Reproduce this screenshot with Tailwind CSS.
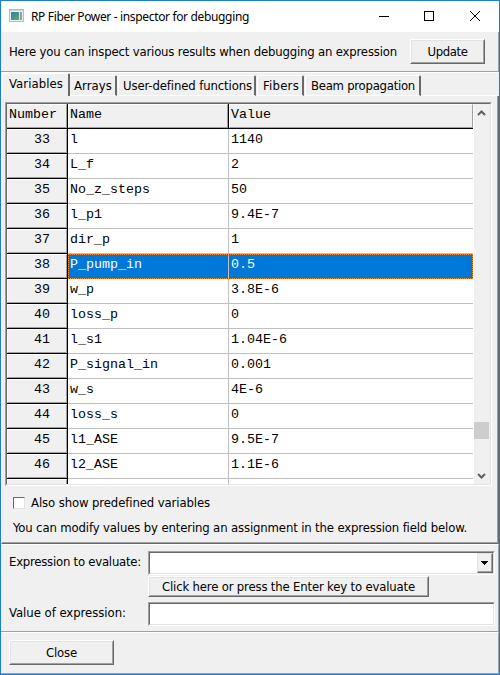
<!DOCTYPE html>
<html lang="en"><head><meta charset="utf-8"><title>RP Fiber Power - inspector for debugging</title>
<script src="https://cdn.jsdelivr.net/npm/@tailwindcss/browser@4"></script></head>
<body class="w-[500px] h-[675px] overflow-hidden">
<main class="w-[500px] h-[675px] flex flex-col border border-[#1a7fd4] bg-[#f0f0f0] text-black text-[13px] leading-[16px] whitespace-nowrap font-['DejaVu_Sans_Condensed','DejaVu_Sans','Noto_Sans',sans-serif] font-stretch-condensed">
  <header class="h-[31px] shrink-0 bg-white flex items-center pl-2 text-[12px] font-['Noto_Sans',sans-serif] font-stretch-normal">
    <svg class="w-4 h-4 shrink-0 -mt-[2px]" viewBox="0 0 16 16" shape-rendering="crispEdges"><defs><linearGradient id="g" x2="1" y2="1"><stop stop-color="#397daf"/><stop offset="1" stop-color="#58a86c"/></linearGradient></defs><path fill="#b5bbc0" d="M0 1h15v13H0z"/><path fill="#eef1f2" d="M1 2h13v11H1z"/><path fill="#cbd0d2" d="M1 2h13v1H1z"/><path fill="url(#g)" d="M2 4h8v8H2z"/><path fill="#dce3e6" d="M10 4h1v8h-1z"/><path fill="#8aa0a7" d="M11 4h2v8h-2z"/></svg>
    <span class="ml-[6px]" data-w="218">RP Fiber Power - inspector for debugging</span>
    <svg class="ml-auto mr-[17px] mt-[-2px] w-[103px] h-3 shrink-0" viewBox="0 0 103 12" fill="none" stroke="#000"><path d="M0 6.5h10M45.500 1.500h9v9h-9z" shape-rendering="crispEdges"/><path d="M91 1l10 10M101 1L91 11"/></svg>
  </header>
  <section class="h-[40px] shrink-0 border-b border-[#a0a0a0] border-r flex items-center pl-2 pr-[13px] justify-between">
    <span data-w="388">Here you can inspect various results when debugging an expression</span>
    <button class="w-[75px] h-[25px] border border-t-white border-l-white border-r-[#696969] border-b-[#696969]"><span class="flex h-full items-center justify-center border border-t-[#e3e3e3] border-l-[#e3e3e3] border-r-[#a0a0a0] border-b-[#a0a0a0]"><span data-w="40">Update</span></span></button>
  </section>
  <nav class="h-[24px] shrink-0 border-t border-white flex items-end pl-px">
    <div class="w-[68px] h-[23px] pl-[6px] pt-[2px] border-l border-l-white border-t border-t-white border-r-2 border-r-[#696969] rounded-t-[2px]"><span data-w="54">Variables</span></div>
    <div class="w-[47px] h-[21px] pl-[4px] pt-[2px] border-t border-t-white border-r-2 border-r-[#696969] border-b border-b-white rounded-t-[2px]"><span data-w="38">Arrays</span></div>
    <div class="w-[138px] h-[21px] ml-px pl-[4px] pt-[2px] border-l border-l-white border-t border-t-white border-r-2 border-r-[#696969] border-b border-b-white rounded-t-[2px]"><span data-w="129">User-defined functions</span></div>
    <div class="w-[47px] h-[21px] ml-px pl-[5px] pt-[2px] border-l border-l-white border-t border-t-white border-r-2 border-r-[#696969] border-b border-b-white rounded-t-[2px]"><span data-w="36">Fibers</span></div>
    <div class="w-[116px] h-[21px] ml-px pl-[5px] pt-[2px] border-l border-l-white border-t border-t-white border-r-2 border-r-[#696969] border-b border-b-white rounded-t-[2px]"><span data-w="104">Beam propagation</span></div>
    <div class="flex-1 border-b border-white"></div>
  </nav>
  <section class="h-[448px] shrink-0 border-l border-l-white border-r border-b border-r-[#696969] border-b-[#696969]">
   <div class="h-full border-r border-b border-[#a0a0a0] pt-[6px] pl-[3px]">
    <div class="w-[487px] h-[384px] border border-t-[#a0a0a0] border-l-[#a0a0a0] border-r-white border-b-white">
     <div class="h-full flex border border-t-[#696969] border-l-[#696969] border-r-[#e3e3e3] border-b-[#e3e3e3] bg-white">
      <div id="grid" class="w-[466px] h-[380px] overflow-hidden text-[13.333px] leading-[14px] font-['Liberation_Mono',monospace] font-stretch-normal">
       <div class="flex h-[25px] bg-[#f0f0f0] border-b border-black">
        <div class="w-[61px] shrink-0 border-r border-black"><div class="h-full border-r border-b border-[#a0a0a0] border-t border-t-white pl-[2px] pt-[3px]">Number</div></div>
        <div class="w-[161px] shrink-0 border-r border-black"><div class="h-full border-l border-l-white border-t border-t-white border-r border-b border-[#a0a0a0] pl-px pt-[3px]">Name</div></div>
        <div class="flex-1 border-l border-l-white border-t border-t-white border-r border-b border-[#a0a0a0] pl-px pt-[3px]">Value</div>
       </div>
      </div>
      <div class="ml-px w-4 bg-[#f0f0f0] flex flex-col items-center">
       <svg class="w-4 h-[17px] shrink-0" viewBox="0 0 16 17" fill="none" stroke="#606060" stroke-width="2"><path d="M4 11l3.500-3.500L11 11"/></svg>
       <div class="w-[15px] h-[17px] mt-[301px] self-start bg-[#cdcdcd]"></div>
       <svg class="w-4 h-[17px] mt-auto shrink-0" viewBox="0 0 16 17" fill="none" stroke="#606060" stroke-width="2"><path d="M4 7l3.500 3.500L11 7"/></svg>
      </div>
     </div>
    </div>
    <label class="flex items-center mt-[9px] ml-[8px] h-4"><span class="w-3 h-3 -mt-px bg-white border border-t-[#696969] border-l-[#696969] border-r-[#e3e3e3] border-b-[#e3e3e3]"></span><span class="ml-[6px]" data-w="179">Also show predefined variables</span></label>
    <p class="mt-[9px] ml-[8px]"><span data-w="454">You can modify values by entering an assignment in the expression field below.</span></p>
   </div>
  </section>
  <section class="h-[88px] shrink-0 border-t border-t-white border-r border-r-[#a0a0a0] border-b border-b-[#a0a0a0] pl-2 pt-[6px]">
   <div class="flex h-[24px]"><div class="w-[139px] pt-[3px]"><span data-w="132">Expression to evaluate:</span></div>
    <div class="w-[347px] h-[24px] border border-t-[#a0a0a0] border-l-[#a0a0a0] border-r-white border-b-white"><div class="h-full bg-white flex justify-end border border-t-[#696969] border-l-[#696969] border-r-[#e3e3e3] border-b-[#e3e3e3]">
     <div class="w-4 h-5 bg-[#f0f0f0] border border-t-[#e3e3e3] border-l-[#e3e3e3] border-r-[#696969] border-b-[#696969]"><svg class="w-full h-full border-r border-b border-[#a0a0a0]" viewBox="0 0 13 17"><path d="M3 7h7v1H9v1H8v1H7v1H6v-1H5V9H4V8H3z" shape-rendering="crispEdges"/></svg></div>
    </div></div></div>
   <button class="block ml-[139px] mt-px w-[281px] h-[21px] border border-t-white border-l-white border-r-[#696969] border-b-[#696969]"><span class="flex h-full items-center justify-center border border-t-[#e3e3e3] border-l-[#e3e3e3] border-r-[#a0a0a0] border-b-[#a0a0a0]"><span data-w="253">Click here or press the Enter key to evaluate</span></span></button>
   <div class="flex mt-[5px]"><div class="w-[139px] pt-[3px]"><span data-w="117">Value of expression:</span></div>
    <div class="w-[347px] h-[24px] border border-t-[#a0a0a0] border-l-[#a0a0a0] border-r-white border-b-white"><div class="h-full bg-white border border-t-[#696969] border-l-[#696969] border-r-[#e3e3e3] border-b-[#e3e3e3]"></div></div></div>
  </section>
  <footer class="flex-1 border-t border-t-white border-r border-b border-r-[#a0a0a0] border-b-[#a0a0a0] pl-2 pt-[7px]">
   <button class="w-[105px] h-[25px] border border-t-white border-l-white border-r-[#696969] border-b-[#696969]"><span class="flex h-full items-center justify-center border border-t-[#e3e3e3] border-l-[#e3e3e3] border-r-[#a0a0a0] border-b-[#a0a0a0]"><span data-w="31">Close</span></span></button>
  </footer>
</main>
<script>
const rows=[["33","l","1140"],["34","L_f","2"],["35","No_z_steps","50"],["36","l_p1","9.4E-7"],["37","dir_p","1"],["38","P_pump_in","0.5"],["39","w_p","3.8E-6"],["40","loss_p","0"],["41","l_s1","1.04E-6"],["42","P_signal_in","0.001"],["43","w_s","4E-6"],["44","loss_s","0"],["45","l1_ASE","9.5E-7"],["46","l2_ASE","1.1E-6"],["","",""]];
const grid=document.getElementById('grid');
for(const [n,name,v] of rows){
  const sel=n==="38";
  grid.insertAdjacentHTML('beforeend',`<div class="flex h-[25px]">
  <div class="w-[61px] shrink-0 border-r border-b border-black bg-[#f0f0f0]"><div class="h-full border-t border-l border-t-white border-l-white border-r border-b border-r-[#a0a0a0] border-b-[#a0a0a0] pl-[26px] pt-[3px]">${n}</div></div>
  <div class="flex flex-1 ${sel?'bg-[#0078d7] text-white border border-dotted border-[#ff8728]':'border-b border-[#c0c0c0]'}">
  <div class="shrink-0 border-r border-[#c0c0c0] ${sel?'w-[160px] pl-px pt-[3px]':'w-[161px] pl-[2px] pt-1'}">${name}</div>
  <div class="pl-[2px] ${sel?'pt-[3px]':'pt-1'}">${v}</div></div></div>`);
}
// Set the tracking of each label from its nominal width.
function fit(){
  for(const el of document.querySelectorAll('[data-w]')){
    el.style.letterSpacing='0px';
    el.style.letterSpacing=((+el.dataset.w-el.getBoundingClientRect().width)/el.textContent.length)+'px';
  }
}
fit();
addEventListener('load',()=>{fit();requestAnimationFrame(fit);document.fonts.ready.then(fit);});
</script>
</body></html>
